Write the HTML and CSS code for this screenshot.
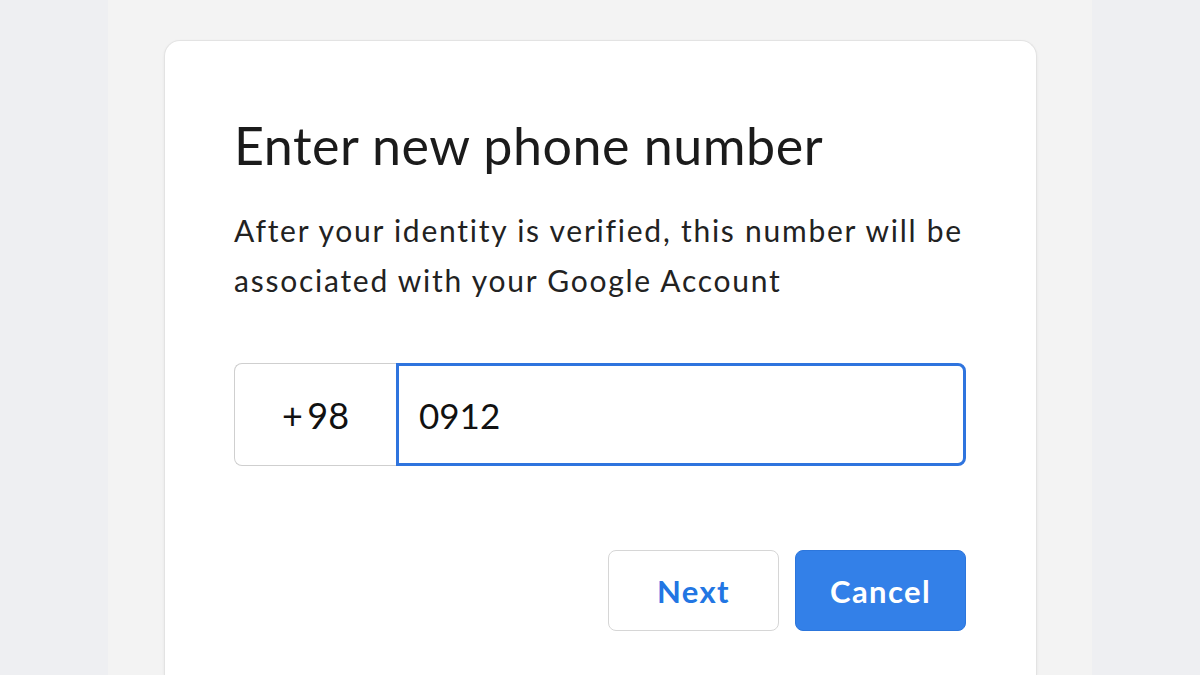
FILE: index.html
```html
<html>
  <head>
    <title>Enter new phone number</title>
    <link rel="stylesheet" href="styles.css">
  </head>
  <body>
    <div class="page">
      <div class="side"></div>
      <div class="center">
        <div class="card">
          <h1 class="title">Enter new phone number</h1>
          <p class="desc">After your identity is verified, this number will be associated with your Google Account</p>
          <div class="phone-row">
            <div class="code">+&thinsp;98</div>
            <div class="number">0912</div>
          </div>
          <div class="actions">
            <button class="btn btn-outline">Next</button>
            <button class="btn btn-primary">Cancel</button>
          </div>
        </div>
      </div>
      <div class="side"></div>
    </div>
  </body>
</html>
```

FILE: styles.css
```css
body {
  margin: 0;
  background-color: #f3f3f3;
  font-family: Lato, "Noto Sans", sans-serif;
  color: #1f1f1f;
  overflow: hidden;
}
.page {
  display: flex;
  height: 675px;
  overflow: hidden;
}
.side {
  width: 108px;
  background-color: #eeeff2;
}
.center {
  flex: 1;
  padding-top: 40px;
  padding-left: 56px;
  padding-right: 55px;
}
.card {
  box-sizing: border-box;
  height: 635px;
  background-color: #ffffff;
  border: 1px solid #e3e3e3;
  border-bottom: none;
  border-radius: 16px 16px 0 0;
  box-shadow: 0 1px 3px rgba(0, 0, 0, 0.06);
  padding: 72px 70px 0 69px;
}
.title {
  margin: 0;
  font-size: 52px;
  font-weight: 400;
  letter-spacing: 0.5px;
  line-height: 64px;
  color: #1b1b1b;
}
.desc {
  margin: 28px 0 0 0;
  font-size: 30px;
  letter-spacing: 1.75px;
  line-height: 50px;
  color: #222222;
  max-width: 760px;
}
.phone-row {
  display: flex;
  margin-top: 58px;
  height: 103px;
}
.code {
  width: 161px;
  border: 1px solid #cfcfcf;
  border-right: none;
  border-radius: 8px 0 0 8px;
  display: flex;
  align-items: center;
  justify-content: center;
  font-size: 36px;
  color: #111111;
}
.number {
  flex: 1;
  border: 3px solid #2f74de;
  border-radius: 0 8px 8px 0;
  display: flex;
  align-items: center;
  padding-left: 20px;
  font-size: 35px;
  color: #111111;
}
.actions {
  display: flex;
  justify-content: flex-end;
  gap: 16px;
  margin-top: 84px;
}
.btn {
  width: 171px;
  height: 81px;
  border-radius: 8px;
  font-family: Lato, "Noto Sans", sans-serif;
  font-size: 31px;
  font-weight: 700;
  letter-spacing: 1.4px;
}
.btn-outline {
  background-color: #ffffff;
  border: 1px solid #d6d6d6;
  color: #2276e3;
}
.btn-primary {
  background-color: #3380e8;
  border: 1px solid #2c76dc;
  color: #ffffff;
}
```
